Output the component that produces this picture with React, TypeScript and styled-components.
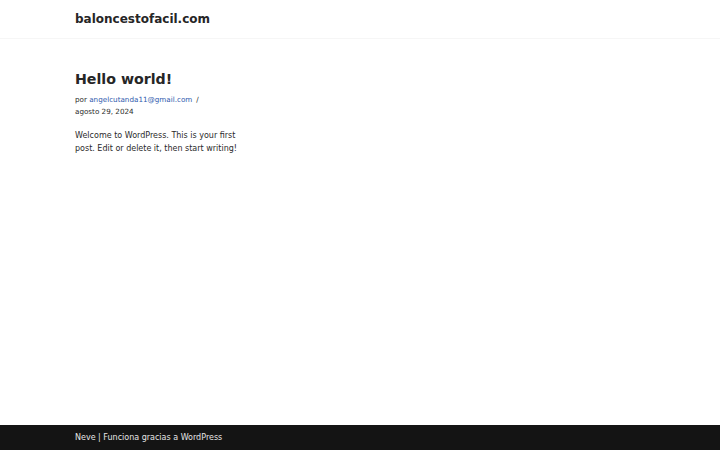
import styled, { createGlobalStyle } from "styled-components";

const GlobalStyle = createGlobalStyle`
  html, body {
    margin: 0;
    padding: 0;
    background: #fff;
  }
  body {
    font-family: "DejaVu Sans", "Noto Sans", sans-serif;
    color: #2b2b2b;
  }
`;

export default function App() {
  return (
    <>
      <GlobalStyle />
      <Page>
        <Header>
          <Container>
            <SiteTitle>baloncestofacil.com</SiteTitle>
          </Container>
        </Header>
        <Main>
          <Container>
            <Post>
              <PostTitle>Hello world!</PostTitle>
              <Meta>
                por <MetaLink href="#">angelcutanda11@gmail.com</MetaLink>
                <Sep>/</Sep>
                <br />
                agosto 29, 2024
              </Meta>
              <Excerpt>
                Welcome to WordPress. This is your first post. Edit or delete
                it, then start writing!
              </Excerpt>
            </Post>
          </Container>
        </Main>
        <Footer>
          <Container>
            <FooterText>Neve | Funciona gracias a WordPress</FooterText>
          </Container>
        </Footer>
      </Page>
    </>
  );
}

const Page = styled.div`
  display: flex;
  flex-direction: column;
  min-height: 100vh;
`;

const Container = styled.div`
  width: 570px;
  margin: 0 auto;
`;

const Header = styled.header`
  padding: 11px 0 10px;
  border-bottom: 1px solid #f6f6f6;
`;

const SiteTitle = styled.div`
  font-size: 12px;
  font-weight: 700;
  color: #262626;
  line-height: 17px;
`;

const Main = styled.main`
  flex: 1;
  padding-top: 30px;
`;

const Post = styled.article`
  width: 172px;
`;

const PostTitle = styled.h1`
  margin: 0;
  font-size: 14.2px;
  font-weight: 700;
  color: #262626;
  line-height: 20px;
`;

const Meta = styled.div`
  margin-top: 5px;
  font-size: 7.2px;
  line-height: 12px;
  color: #2b2b2b;
`;

const MetaLink = styled.a`
  color: #2f5aae;
  text-decoration: none;
`;

const Sep = styled.span`
  margin-left: 4px;
`;

const Excerpt = styled.p`
  margin: 11px 0 0;
  font-size: 8px;
  line-height: 13px;
  color: #2b2b2b;
`;

const Footer = styled.footer`
  background: #141414;
  height: 25px;
  display: flex;
  align-items: center;
`;

const FooterText = styled.div`
  font-size: 8px;
  color: #e6e6e6;
  line-height: 12px;
`;
